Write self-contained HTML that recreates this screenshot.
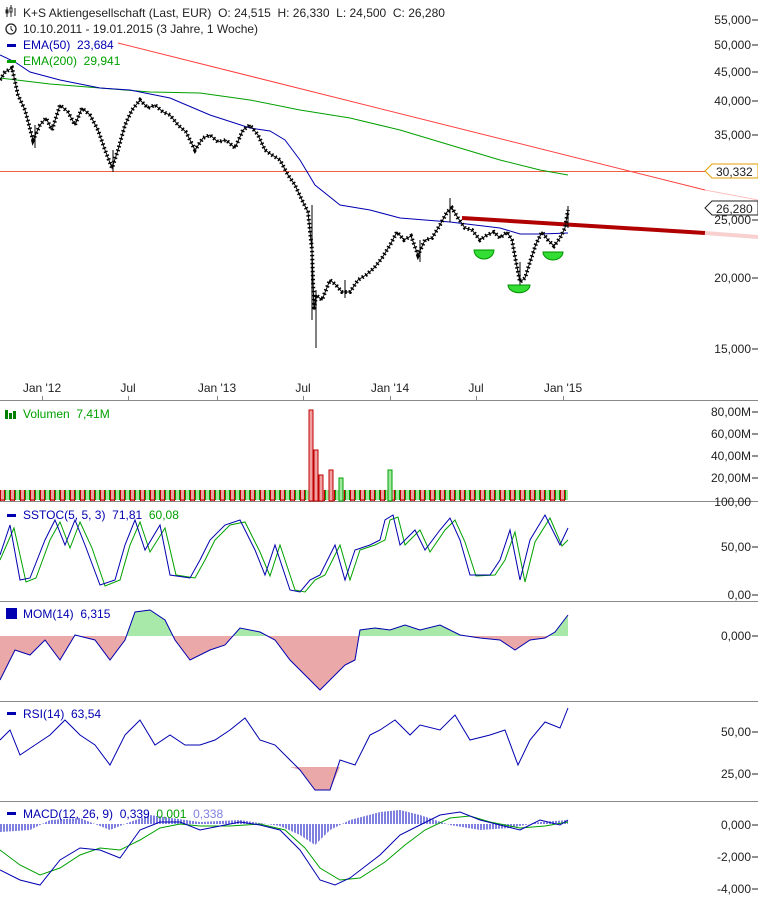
<!DOCTYPE html>
<html><head><meta charset="utf-8"><style>
html,body{margin:0;padding:0;background:#fff;}
svg{display:block;font-family:"Liberation Sans",sans-serif;}
text{white-space:pre;}
</style></head><body>
<svg width="758" height="901" viewBox="0 0 758 901" xmlns="http://www.w3.org/2000/svg">
<defs>
<pattern id="vol" width="10" height="20" patternUnits="userSpaceOnUse">
<rect x="0.5" y="0" width="4" height="20" fill="#f0a0a0" stroke="#c00000" stroke-width="1"/>
<rect x="5.5" y="3" width="4" height="20" fill="#a0e8a0" stroke="#00a000" stroke-width="1"/>
</pattern>
<pattern id="hist" width="3" height="10" patternUnits="userSpaceOnUse">
<rect x="0" y="0" width="2" height="10" fill="#8080e0"/>
</pattern>
<clipPath id="mAbove"><rect x="0" y="601" width="568" height="35"/></clipPath>
<clipPath id="mBelow"><rect x="0" y="636" width="568" height="65"/></clipPath>
<clipPath id="rBelow"><rect x="0" y="767" width="568" height="34"/></clipPath>
</defs>

<g stroke="#888" stroke-width="1">
<line x1="0" y1="400.5" x2="758" y2="400.5"/>
<line x1="0" y1="501.5" x2="758" y2="501.5"/>
<line x1="0" y1="601.5" x2="758" y2="601.5"/>
<line x1="0" y1="701.5" x2="758" y2="701.5"/>
<line x1="0" y1="801.5" x2="758" y2="801.5"/>
</g>
<g stroke="#888" stroke-width="1">
<line x1="42.5" y1="396" x2="42.5" y2="400"/><line x1="128.5" y1="396" x2="128.5" y2="400"/>
<line x1="217.5" y1="396" x2="217.5" y2="400"/><line x1="303.5" y1="396" x2="303.5" y2="400"/>
<line x1="390.5" y1="396" x2="390.5" y2="400"/><line x1="476.5" y1="396" x2="476.5" y2="400"/>
<line x1="563.5" y1="396" x2="563.5" y2="400"/>
</g>

<g font-size="12" fill="#222" text-anchor="end">
<text x="751" y="24">55,000</text><text x="751" y="49">50,000</text><text x="751" y="76">45,000</text>
<text x="751" y="105">40,000</text><text x="751" y="139">35,000</text><text x="751" y="224">25,000</text>
<text x="751" y="282">20,000</text><text x="751" y="353">15,000</text>
<text x="751" y="416">80,00M</text><text x="751" y="438">60,00M</text><text x="751" y="460">40,00M</text><text x="751" y="482">20,00M</text>
<text x="751" y="506">100,00</text><text x="751" y="551">50,00</text><text x="751" y="599">0,00</text>
<text x="751" y="640">0,000</text>
<text x="751" y="736">50,00</text><text x="751" y="778">25,00</text>
<text x="751" y="829">0,000</text><text x="751" y="861">-2,000</text><text x="751" y="893">-4,000</text>
</g>
<g stroke="#222"><line x1="752" y1="20" x2="758" y2="20"/><line x1="752" y1="45" x2="758" y2="45"/><line x1="752" y1="72" x2="758" y2="72"/><line x1="752" y1="101" x2="758" y2="101"/><line x1="752" y1="135" x2="758" y2="135"/><line x1="752" y1="220" x2="758" y2="220"/><line x1="752" y1="278" x2="758" y2="278"/><line x1="752" y1="349" x2="758" y2="349"/>
<line x1="752" y1="412" x2="758" y2="412"/><line x1="752" y1="434" x2="758" y2="434"/><line x1="752" y1="456" x2="758" y2="456"/><line x1="752" y1="478" x2="758" y2="478"/>
<line x1="752" y1="547" x2="758" y2="547"/><line x1="752" y1="595" x2="758" y2="595"/><line x1="752" y1="636" x2="758" y2="636"/><line x1="752" y1="732" x2="758" y2="732"/><line x1="752" y1="774" x2="758" y2="774"/><line x1="752" y1="825" x2="758" y2="825"/><line x1="752" y1="857" x2="758" y2="857"/><line x1="752" y1="889" x2="758" y2="889"/></g>

<g font-size="12" fill="#222" text-anchor="middle">
<text x="42" y="392">Jan '12</text><text x="128" y="392">Jul</text><text x="217" y="392">Jan '13</text>
<text x="303" y="392">Jul</text><text x="390" y="392">Jan '14</text><text x="476" y="392">Jul</text><text x="563" y="392">Jan '15</text>
</g>

<line x1="0" y1="171.5" x2="705" y2="171.5" stroke="#f06040" stroke-width="1"/>
<line x1="118" y1="43" x2="705" y2="190" stroke="#ff4040" stroke-width="1"/>
<line x1="705" y1="190" x2="758" y2="200" stroke="#ffc0c0" stroke-width="1"/>
<line x1="462" y1="218" x2="705" y2="233" stroke="#b00000" stroke-width="4"/>
<line x1="705" y1="233" x2="758" y2="237" stroke="#f8d0d0" stroke-width="4"/>
<polyline fill="none" stroke="#00a000" stroke-width="1" points="0,78 50,84 100,88 150,92 200,93 250,100 300,110 350,118 400,130 450,145 500,160 540,170 568,175"/>
<polyline fill="none" stroke="#0000b0" stroke-width="1" points="0,55 15,62 30,72 60,80 100,88 130,90 170,98 210,115 250,128 270,131 285,140 300,160 315,185 340,205 370,210 400,218 450,222 500,228 520,234 540,234 568,233"/>
<g fill="none" stroke="#000">
<polyline id="px" stroke-width="1" points="0,80 5,72 12,68 18,95 25,110 33,140 40,125 46,118 52,130 60,105 68,112 75,125 82,108 90,115 98,130 105,150 112,168 118,150 125,125 132,110 140,100 148,108 155,105 163,112 170,115 178,125 186,132 195,150 203,138 210,135 218,142 226,140 235,148 243,130 250,125 258,135 265,150 272,155 280,160 288,175 295,185 302,200 308,212 312,250 314,310 316,295 322,300 330,280 336,285 342,292 350,292 358,280 366,275 374,268 382,258 390,245 397,232 404,240 411,236 418,255 425,240 432,238 440,225 447,212 452,208 458,218 465,228 472,230 480,240 487,235 494,232 500,238 507,232 512,240 516,262 520,282 525,278 530,262 536,244 542,232 548,240 554,246 560,238 565,228 568,210"/>
<polyline stroke-width="4" stroke-dasharray="1.5 2.5" points="0,80 5,72 12,68 18,95 25,110 33,140 40,125 46,118 52,130 60,105 68,112 75,125 82,108 90,115 98,130 105,150 112,168 118,150 125,125 132,110 140,100 148,108 155,105 163,112 170,115 178,125 186,132 195,150 203,138 210,135 218,142 226,140 235,148 243,130 250,125 258,135 265,150 272,155 280,160 288,175 295,185 302,200 308,212 312,250 314,310 316,295 322,300 330,280 336,285 342,292 350,292 358,280 366,275 374,268 382,258 390,245 397,232 404,240 411,236 418,255 425,240 432,238 440,225 447,212 452,208 458,218 465,228 472,230 480,240 487,235 494,232 500,238 507,232 512,240 516,262 520,282 525,278 530,262 536,244 542,232 548,240 554,246 560,238 565,228 568,210"/>
</g>
<g stroke="#000" stroke-width="1">
<line x1="316" y1="290" x2="316" y2="348"/><line x1="312" y1="205" x2="312" y2="320"/><line x1="450" y1="198" x2="450" y2="222"/><line x1="568" y1="206" x2="568" y2="228"/><line x1="520" y1="262" x2="520" y2="290"/>
<line x1="113" y1="150" x2="113" y2="172"/><line x1="35" y1="125" x2="35" y2="148"/><line x1="420" y1="240" x2="420" y2="262"/><line x1="345" y1="280" x2="345" y2="298"/>
</g>
<g fill="#33dd33" stroke="#009000" stroke-width="1">
<path d="M474,250 A10,9 0 0 0 494,250 Z"/><path d="M508,285 A10,7 0 0 0 530,285 Z"/><path d="M543,252 A10,8 0 0 0 563,252 Z"/>
</g>
<path d="M705,171 L712,164 L758,164 L758,178 L712,178 Z" fill="#fff" stroke="#e0a000"/>
<text x="716" y="176" font-size="12" fill="#222">30,332</text>
<path d="M705,208 L712,201 L758,201 L758,215 L712,215 Z" fill="#fff" stroke="#222"/>
<text x="716" y="213" font-size="12" fill="#222">26,280</text>

<g stroke="#222" stroke-width="1"><line x1="7" y1="7" x2="7" y2="17"/><line x1="11" y1="5" x2="11" y2="17"/><line x1="15" y1="8" x2="15" y2="16"/><rect x="6" y="10" width="2" height="3" fill="#222"/><rect x="10" y="8" width="2" height="4" fill="#fff"/></g>
<text x="23" y="17" font-size="12" fill="#222">K+S Aktiengesellschaft (Last, EUR)  O: 24,515  H: 26,330  L: 24,500  C: 26,280</text>
<circle cx="11" cy="29" r="5" fill="none" stroke="#222" stroke-width="1.3"/><path d="M11,26 L11,29 L13,31" fill="none" stroke="#222"/>
<text x="23" y="33" font-size="12" fill="#222">10.10.2011 - 19.01.2015 (3 Jahre, 1 Woche)</text>
<rect x="7" y="44" width="9" height="3" fill="#0000b0"/><text x="23" y="49" font-size="12" fill="#0000b0">EMA(50)  23,684</text>
<rect x="7" y="60" width="9" height="3" fill="#00a000"/><text x="23" y="65" font-size="12" fill="#00a000">EMA(200)  29,941</text>

<rect x="0" y="490" width="568" height="11" fill="url(#vol)"/>
<rect x="309" y="410" width="4" height="91" fill="#f0a0a0" stroke="#c00000"/>
<rect x="314" y="450" width="4" height="51" fill="#f0a0a0" stroke="#c00000"/>
<rect x="319" y="475" width="4" height="26" fill="#f0a0a0" stroke="#c00000"/>
<rect x="329" y="470" width="4" height="31" fill="#f0a0a0" stroke="#c00000"/>
<rect x="388" y="470" width="4" height="31" fill="#a0e8a0" stroke="#00a000"/>
<rect x="339" y="478" width="4" height="23" fill="#a0e8a0" stroke="#00a000"/>
<rect x="5" y="410" width="3" height="9" fill="#008000"/><rect x="9" y="413" width="3" height="6" fill="#008000"/><rect x="13" y="411" width="3" height="8" fill="#008000"/>
<text x="23" y="418" font-size="12" fill="#00a000">Volumen  7,41M</text>

<polyline fill="none" stroke="#00a000" stroke-width="1" points="0,560 14,528 26,582 36,578 50,540 60,522 70,548 80,522 92,548 105,586 120,580 130,545 140,522 150,552 165,528 176,575 195,578 205,560 215,540 230,525 245,522 260,552 270,576 280,545 295,590 305,592 315,580 325,575 340,545 350,580 360,550 375,545 385,540 390,520 398,517 405,545 420,530 430,552 445,530 455,520 465,542 476,576 495,575 505,560 515,532 525,582 535,542 550,518 562,546 568,540"/>
<polyline fill="none" stroke="#0000b0" stroke-width="1" points="0,555 10,525 20,580 30,578 45,540 55,520 65,545 75,520 85,545 100,585 115,580 125,545 135,520 145,550 160,525 170,575 190,578 200,560 210,540 225,525 240,520 255,550 265,575 275,545 290,590 300,592 310,580 320,575 335,545 345,580 355,550 370,545 380,540 385,520 393,515 400,545 415,530 425,550 440,530 450,518 460,540 470,575 490,575 500,560 510,530 520,580 530,540 545,515 560,545 568,528"/>
<rect x="7" y="514" width="9" height="3" fill="#0000b0"/>
<text x="23" y="519" font-size="12" fill="#0000b0">SSTOC(5, 5, 3)  71,81  <tspan fill="#00a000">60,08</tspan></text>

<g>
<polygon clip-path="url(#mAbove)" fill="#a8e8a8" points="0,636 0,680 15,650 30,655 45,640 60,660 75,635 95,640 110,660 125,640 135,612 150,610 165,620 175,640 190,660 210,650 225,645 240,628 260,632 275,640 290,660 310,680 320,690 330,680 345,665 355,660 360,630 375,628 390,630 405,625 420,630 440,625 460,635 480,638 500,640 515,650 530,640 545,638 555,632 568,615 568,636"/>
<polygon clip-path="url(#mBelow)" fill="#eaa8a8" points="0,636 0,680 15,650 30,655 45,640 60,660 75,635 95,640 110,660 125,640 135,612 150,610 165,620 175,640 190,660 210,650 225,645 240,628 260,632 275,640 290,660 310,680 320,690 330,680 345,665 355,660 360,630 375,628 390,630 405,625 420,630 440,625 460,635 480,638 500,640 515,650 530,640 545,638 555,632 568,615 568,636"/>
<polyline fill="none" stroke="#0000b0" stroke-width="1" points="0,680 15,650 30,655 45,640 60,660 75,635 95,640 110,660 125,640 135,612 150,610 165,620 175,640 190,660 210,650 225,645 240,628 260,632 275,640 290,660 310,680 320,690 330,680 345,665 355,660 360,630 375,628 390,630 405,625 420,630 440,625 460,635 480,638 500,640 515,650 530,640 545,638 555,632 568,615"/>
</g>
<rect x="6" y="608" width="11" height="11" fill="#0000b0"/>
<text x="23" y="618" font-size="12" fill="#0000b0">MOM(14)  6,315</text>

<polygon clip-path="url(#rBelow)" fill="#eaa8a8" points="290,767 300,770 315,790 330,790 340,767"/>
<polyline fill="none" stroke="#0000b0" stroke-width="1" points="0,740 10,730 20,755 35,745 50,735 65,720 80,735 95,745 110,765 125,735 140,720 155,745 170,735 185,745 200,745 215,740 230,730 245,718 260,740 275,745 290,760 300,770 315,790 330,790 340,760 355,765 370,735 380,730 395,720 410,735 420,725 440,730 455,715 470,740 490,735 505,730 518,765 530,740 545,722 560,728 568,708"/>
<rect x="7" y="712" width="9" height="3" fill="#0000b0"/>
<text x="23" y="718" font-size="12" fill="#0000b0">RSI(14)  63,54</text>

<polygon fill="url(#hist)" points="0,824 0,832 30,830 50,820 80,818 110,830 130,822 150,815 200,822 240,820 280,826 300,835 315,845 330,830 350,820 380,812 400,810 420,815 450,825 480,830 510,828 540,822 568,820 568,824"/>
<polyline fill="none" stroke="#00a000" stroke-width="1" points="0,850 20,865 40,875 60,868 80,855 100,848 120,850 140,840 160,828 180,824 200,826 230,826 260,824 285,830 305,848 320,868 340,880 360,878 385,862 405,845 425,830 450,818 470,816 490,822 520,828 545,826 568,822"/>
<polyline fill="none" stroke="#0000b0" stroke-width="1" points="0,870 20,880 40,885 60,860 80,848 100,850 120,858 140,830 160,822 180,822 200,830 220,826 240,822 260,825 280,830 300,850 320,880 335,885 350,878 380,855 400,835 420,825 440,815 460,812 480,820 500,825 520,830 540,820 560,825 568,820"/>
<rect x="7" y="812" width="9" height="3" fill="#0000b0"/>
<text x="23" y="818" font-size="12" fill="#0000b0">MACD(12, 26, 9)  0,339  <tspan fill="#00a000">0,001</tspan>  <tspan fill="#8080e0">0,338</tspan></text>
</svg>
</body></html>
